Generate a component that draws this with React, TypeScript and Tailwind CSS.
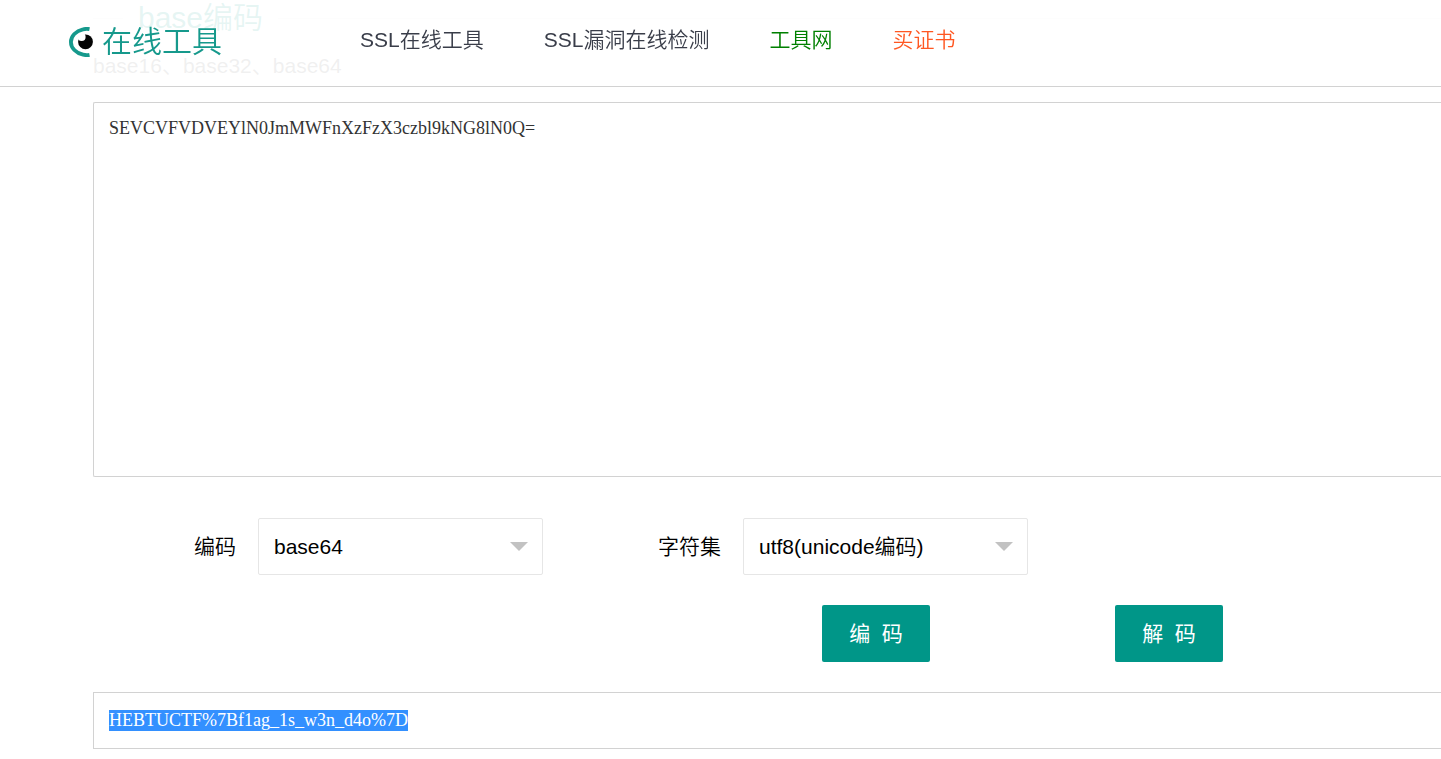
import { useEffect, useRef, useState } from "react";

const NAV_LINKS = [
   { label: "SSL在线工具", className: "text-[#393d49]" },
   { label: "SSL漏洞在线检测", className: "text-[#393d49]" },
   { label: "工具网", className: "text-[#008000]" },
   { label: "买证书", className: "text-[#ff5722]" },
];

interface SelectFieldProps {
   id: string;
   label: string;
   labelClassName: string;
   options: string[];
}

const Logo = () => (
   <a href="#" className="flex items-center gap-2 text-[30px] leading-9 font-[350] text-[#16998c]">
      <svg viewBox="0 0 26 30" className="h-[30px] w-[26px]" aria-hidden="true">
         <path
            d="M21.5 2.1C19.5 1.7 17 1.8 15 2.3C8 3.8 2.9 9 2.9 15S8 26.2 15 27.7C17 28.2 19.5 28.3 21.5 27.9"
            fill="none"
            stroke="#16998c"
            strokeWidth="3.8"
         />
         <circle cx="17.5" cy="14.8" r="7.4" fill="#050505" />
         <circle cx="13.6" cy="10" r="4" fill="#ffffff" />
      </svg>
      在线工具
   </a>
);

const SelectField = ({ id, label, labelClassName, options }: SelectFieldProps) => (
   <div className="flex items-center">
      <label htmlFor={id} className={`pr-[22px] text-right ${labelClassName}`}>
         {label}
      </label>
      <div className="relative">
         <select
            id={id}
            className="h-[57px] w-[285px] appearance-none rounded-xs border border-[#e6e6e6] bg-white pl-[15px] pr-10 outline-none"
         >
            {options.map((option) => (
               <option key={option}>{option}</option>
            ))}
         </select>
         <svg
            viewBox="0 0 18 9"
            className="pointer-events-none absolute top-6 right-[15px] h-[9px] w-[18px]"
            aria-hidden="true"
         >
            <path d="M0 0H18L9 9Z" fill="#c2c2c2" />
         </svg>
      </div>
   </div>
);

export default function App() {
   const [source, setSource] = useState("SEVCVFVDVEYlN0JmMWFnXzFzX3czbl9kNG8lN0Q=");
   const [result, setResult] = useState("HEBTUCTF%7Bf1ag_1s_w3n_d4o%7D");
   const resultRef = useRef<HTMLInputElement>(null);

   // Keep the result selected so it can be copied straight away
   useEffect(() => {
      resultRef.current?.focus();
      resultRef.current?.select();
   }, [result]);

   const encode = () => setResult(btoa(source));

   const decode = () => {
      try {
         setResult(atob(source));
      } catch {
         setResult("");
      }
   };

   return (
      <div className="overflow-x-hidden bg-white font-['Liberation_Sans','Noto_Sans_CJK_SC',sans-serif] text-[21px] leading-8 font-[350] text-black">
         {/* Translucent bar, the page title scrolls under it */}
         <header className="fixed inset-x-0 top-0 z-10 flex h-[87px] items-start border-b border-[#d2d2d2] bg-white/90 pl-[68px]">
            <div className="w-[292px] pt-6">
               <Logo />
            </div>
            <nav className="flex gap-[60px] pt-6">
               {NAV_LINKS.map((link) => (
                  <a key={link.label} href="#" className={link.className}>
                     {link.label}
                  </a>
               ))}
            </nav>
         </header>

         <main className="pl-[93px]">
            <div className="flex items-center">
               <span className="w-[30px] border-t border-[#e6e6e6]" />
               <h1 className="px-[15px] text-[30px] leading-9 font-[350] text-[#009688]">base编码</h1>
               <span className="grow border-t border-[#e6e6e6]" />
            </div>
            <p className="pt-[14px] text-[#666666]">base16、base32、base64</p>

            <textarea
               aria-label="待处理内容"
               spellCheck={false}
               value={source}
               onChange={(e) => setSource(e.target.value)}
               className="mt-5 block h-[375px] w-full resize-none rounded-l-xs border border-r-0 border-[#d2d2d2] p-[15px] pt-[13px] font-['Liberation_Serif',serif] text-[18px] leading-6 text-[#333333] outline-none"
            />

            <div className="mt-[41px] flex">
               <SelectField id="codec" label="编码" labelClassName="w-[165px]" options={["base64", "base32", "base16"]} />
               <SelectField
                  id="charset"
                  label="字符集"
                  labelClassName="w-[200px]"
                  options={["utf8(unicode编码)", "gbk"]}
               />
            </div>

            <div className="mt-[30px] flex gap-[185px] pl-[729px]">
               <button
                  type="button"
                  onClick={encode}
                  className="h-[57px] w-[108px] rounded-xs bg-[#009688] font-normal whitespace-nowrap text-white"
               >
                  编&nbsp;&nbsp;码
               </button>
               <button
                  type="button"
                  onClick={decode}
                  className="h-[57px] w-[108px] rounded-xs bg-[#009688] font-normal whitespace-nowrap text-white"
               >
                  解&nbsp;&nbsp;码
               </button>
            </div>

            <input
               ref={resultRef}
               readOnly
               aria-label="结果"
               value={result}
               className="mt-[30px] block h-[57px] w-full border border-r-0 border-[#d2d2d2] px-[15px] font-['Liberation_Serif',serif] text-[18px] leading-6 text-[#333333] outline-none selection:bg-[#3390ff] selection:text-white"
            />
         </main>
      </div>
   );
}
